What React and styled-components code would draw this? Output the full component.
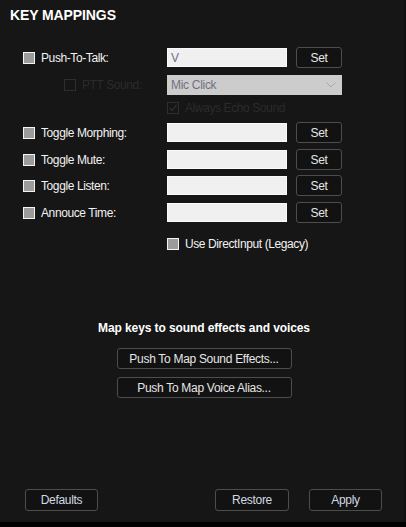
import React from "react";
import styled, { createGlobalStyle } from "styled-components";

/**
 * Page reset
 */
const GlobalStyle = createGlobalStyle`
  html, body {
    margin: 0;
    padding: 0;
    background: #000;
  }
  body {
    font-family: "Liberation Sans", Arial, sans-serif;
    font-size: 12px;
  }
`;

/**
 * Dark window panel
 */
const Panel = styled.div`
  width: 406px;
  height: 522px;
  background: #161616;
  display: flex;
  flex-direction: column;
  box-sizing: border-box;
  border-right: 2px solid #101010;
`;

const Title = styled.h1`
  margin: 8px 0 0 10px;
  font-size: 14px;
  line-height: 14px;
  font-weight: bold;
  color: #fff;
  letter-spacing: -0.1px;
`;

const Rows = styled.div`
  display: flex;
  flex-direction: column;
  margin-top: 25px;
`;

const Row = styled.div`
  display: flex;
  align-items: center;
  height: ${props => props.h || 21}px;
  margin-top: ${props => props.top || 0}px;
`;

const LabelCell = styled.label`
  display: flex;
  align-items: center;
  gap: 6px;
  width: ${props => 167 - props.indent}px;
  padding-left: ${props => props.indent}px;
  color: ${props => (props.disabled ? "#2b2b2b" : "#f2f2f2")};
  letter-spacing: -0.4px;
  white-space: nowrap;
`;

const Box = styled.span`
  display: inline-flex;
  align-items: center;
  justify-content: center;
  flex: none;
  width: 12px;
  height: 12px;
  box-sizing: border-box;
  border: 1px solid ${props => (props.disabled ? "#2e2e2e" : "#f4f4f4")};
  background: ${props => (props.disabled ? "transparent" : "#9b9b9b")};
  box-shadow: ${props => (props.disabled ? "none" : "inset 0 0 0 1px #9b9b9b")};
`;

const KeyInput = styled.div`
  width: 120px;
  height: 19px;
  box-sizing: border-box;
  background: #f0f0f0;
  border: 1px solid #fafafa;
  color: #6f6f8a;
  padding: 2px 3px;
  line-height: 14px;
  letter-spacing: -0.3px;
`;

const Select = styled.div`
  display: flex;
  align-items: center;
  justify-content: space-between;
  width: 175px;
  height: 20px;
  box-sizing: border-box;
  background: #cccccc;
  color: #717180;
  padding: 0 6px 0 4px;
  letter-spacing: -0.3px;
`;

const Button = styled.button`
  width: ${props => props.w}px;
  height: ${props => props.h || 21}px;
  margin-left: ${props => props.left || 0}px;
  box-sizing: border-box;
  background: #121212;
  border: 1px solid #4d4d4d;
  border-radius: 3px;
  color: ${props => props.color || "#e6e6e6"};
  font-family: "Liberation Sans", Arial, sans-serif;
  font-size: 12px;
  letter-spacing: -0.3px;
  padding: 0;
`;

const Section = styled.div`
  display: flex;
  flex-direction: column;
  align-items: center;
  margin-top: 71px;
  padding-left: 4px;
`;

const Heading = styled.div`
  font-weight: bold;
  color: #fff;
  font-size: 12px;
  line-height: 14px;
  margin-bottom: 13px;
  letter-spacing: -0.1px;
`;

const Stack = styled.div`
  display: flex;
  flex-direction: column;
  gap: 8px;
`;

const Footer = styled.div`
  display: flex;
  align-items: center;
  margin-top: auto;
  margin-bottom: 11px;
  padding: 0 22px 0 25px;
`;

const Spacer = styled.div`
  flex: 1;
`;

const Check = () => (
  <svg width="10" height="10" viewBox="0 0 10 10">
    <path d="M1.5 5 L4 7.5 L8.5 2" fill="none" stroke="#2e2e2e" strokeWidth="1.4" />
  </svg>
);

const Chevron = () => (
  <svg width="10" height="6" viewBox="0 0 10 6">
    <path d="M0.5 0.5 L5 5 L9.5 0.5" fill="none" stroke="#a8a8a8" strokeWidth="1" />
  </svg>
);

const mappings = [
  { label: "Toggle Morphing:", top: 8 },
  { label: "Toggle Mute:", top: 6 },
  { label: "Toggle Listen:", top: 5 },
  { label: "Annouce Time:", top: 6 }
];

const MappingRow = ({ label, value, top }) => (
  <Row top={top}>
    <LabelCell indent={23}>
      <Box />
      {label}
    </LabelCell>
    <KeyInput>{value}</KeyInput>
    <Button w={46} left={9}>
      Set
    </Button>
  </Row>
);

const App = () => (
  <>
    <GlobalStyle />
    <Panel>
      <Title>KEY MAPPINGS</Title>
      <Rows>
        <MappingRow label="Push-To-Talk:" value="V" />
        <Row top={7} h={20}>
          <LabelCell indent={64} disabled>
            <Box disabled />
            PTT Sound:
          </LabelCell>
          <Select>
            Mic Click
            <Chevron />
          </Select>
        </Row>
        <Row top={6} h={13}>
          <LabelCell indent={167} disabled>
            <Box disabled>
              <Check />
            </Box>
            Always Echo Sound
          </LabelCell>
        </Row>
        {mappings.map(item => (
          <MappingRow key={item.label} {...item} />
        ))}
        <Row top={15} h={12}>
          <LabelCell indent={167}>
            <Box />
            Use DirectInput (Legacy)
          </LabelCell>
        </Row>
      </Rows>
      <Section>
        <Heading>Map keys to sound effects and voices</Heading>
        <Stack>
          <Button w={175}>Push To Map Sound Effects...</Button>
          <Button w={175}>Push To Map Voice Alias...</Button>
        </Stack>
      </Section>
      <Footer>
        <Button w={73} h={22} color="#d3d9e3">
          Defaults
        </Button>
        <Spacer />
        <Button w={74} h={22} color="#d3d9e3">
          Restore
        </Button>
        <Button w={73} h={22} left={20} color="#d3d9e3">
          Apply
        </Button>
      </Footer>
    </Panel>
  </>
);

export default App;
